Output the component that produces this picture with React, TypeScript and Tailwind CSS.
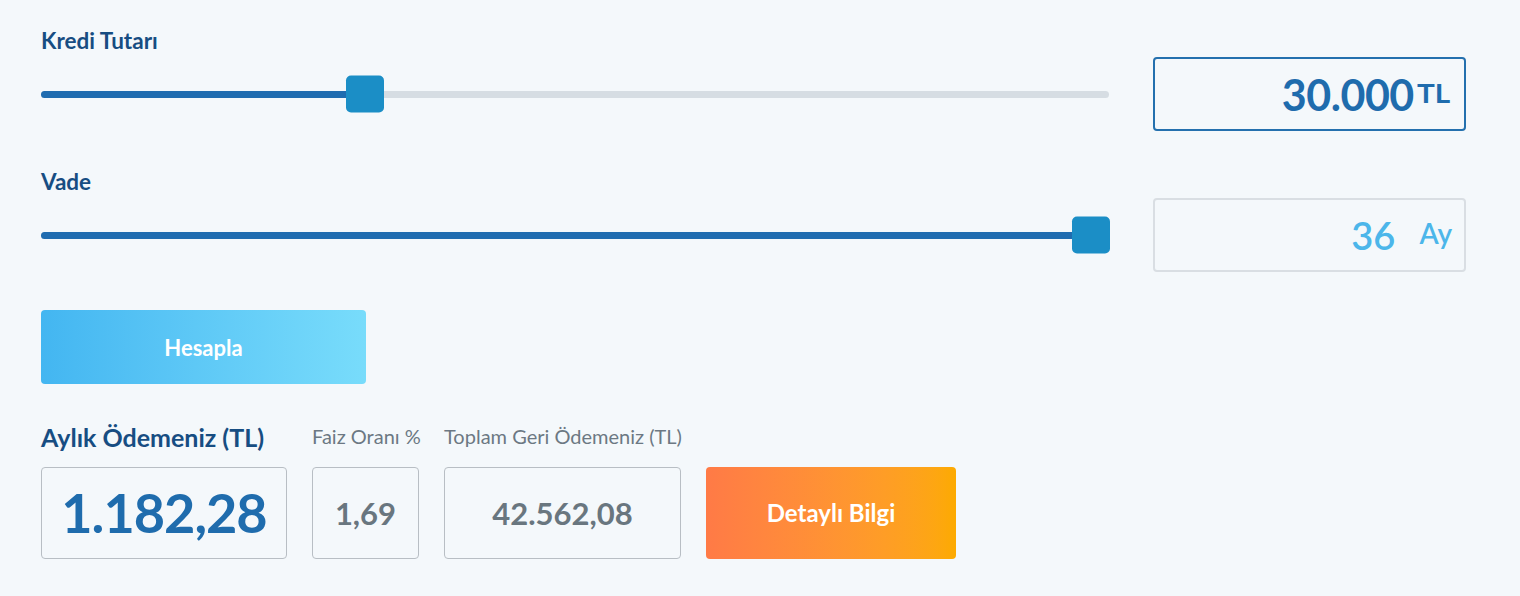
import React from "react";

const font = { fontFamily: "Lato, 'Open Sans', sans-serif" };

function Slider({ pct, thumbLeft }: { pct: number; thumbLeft: number }) {
  return (
    <div className="relative h-[74px] flex items-center">
      <div className="relative w-full h-[7px] rounded-full bg-[#d6dde3]">
        <div className="absolute left-0 top-0 h-full rounded-l-full bg-[#1f6cb0]" style={{ width: `${pct}%` }} />
        <div
          className="absolute top-1/2 -translate-y-1/2 w-[38px] h-[37px] rounded-[5px] bg-[#1b8ec6]"
          style={{ left: `${thumbLeft}px` }}
        />
      </div>
    </div>
  );
}

export default function App() {
  return (
    <div className="min-h-screen bg-[#f4f8fb] pl-[41px] pr-[54px] pt-[27px]" style={font}>
      {/* Kredi Tutarı */}
      <div className="flex items-end gap-[44px]">
        <div className="flex-1 flex flex-col">
          <div className="text-[22.5px] leading-[28px] font-bold text-[#174d82] mb-[2px]">Kredi Tutarı</div>
          <Slider pct={29} thumbLeft={305} />
        </div>
        <div className="w-[313px] h-[74px] border-2 border-[#2470ae] rounded-[4px] flex items-center justify-end pr-[14px]">
          <span className="text-[43px] font-bold text-[#1f6cad] leading-none tracking-[-0.5px]">30.000</span>
          <span className="text-[27px] font-bold text-[#1f6cad] leading-none ml-[6px] -mt-[4px] scale-x-110 origin-right">TL</span>
        </div>
      </div>

      {/* Vade */}
      <div className="flex items-end gap-[44px] mt-[37px]">
        <div className="flex-1 flex flex-col">
          <div className="text-[22.5px] leading-[28px] font-bold text-[#174d82] mb-[2px]">Vade</div>
          <Slider pct={100} thumbLeft={1031} />
        </div>
        <div className="w-[313px] h-[74px] border-2 border-[#d9dee3] rounded-[4px] flex items-center justify-end pr-[12px]">
          <span className="text-[38px] font-semibold text-[#4cb6ea] leading-none">36</span>
          <span className="text-[28px] font-semibold text-[#4cb6ea] leading-none ml-[24px] -mt-[4px]">Ay</span>
        </div>
      </div>

      {/* Hesapla */}
      <button className="mt-[38px] w-[325px] h-[74px] rounded-[4px] bg-gradient-to-r from-[#43b6f1] to-[#78dcfb] text-white text-[22px] font-bold">
        Hesapla
      </button>

      {/* Results */}
      <div className="flex items-end gap-[25px] mt-[38px]">
        <div className="flex flex-col w-[246px]">
          <div className="text-[25px] leading-[30px] font-bold text-[#174d82] mb-[15px] whitespace-nowrap">Aylık Ödemeniz (TL)</div>
          <div className="w-[246px] h-[92px] border border-[#b8bec4] rounded-[4px] flex items-center justify-center">
            <span className="text-[54px] font-bold text-[#1f6cad] leading-none tracking-[-1px]">1.182,28</span>
          </div>
        </div>
        <div className="flex flex-col w-[107px]">
          <div className="text-[20px] leading-[24px] text-[#6c7883] mb-[19px] whitespace-nowrap">Faiz Oranı %</div>
          <div className="w-[107px] h-[92px] border border-[#b8bec4] rounded-[4px] flex items-center justify-center">
            <span className="text-[31px] font-bold text-[#69767f] leading-none">1,69</span>
          </div>
        </div>
        <div className="flex flex-col w-[237px]">
          <div className="text-[20px] leading-[24px] text-[#6c7883] mb-[19px] whitespace-nowrap">Toplam Geri Ödemeniz (TL)</div>
          <div className="w-[237px] h-[92px] border border-[#b8bec4] rounded-[4px] flex items-center justify-center">
            <span className="text-[31px] font-bold text-[#69767f] leading-none">42.562,08</span>
          </div>
        </div>
        <button className="w-[250px] h-[92px] rounded-[4px] bg-gradient-to-r from-[#ff7a46] to-[#fdaa00] text-white text-[24px] font-bold">
          Detaylı Bilgi
        </button>
      </div>
    </div>
  );
}
